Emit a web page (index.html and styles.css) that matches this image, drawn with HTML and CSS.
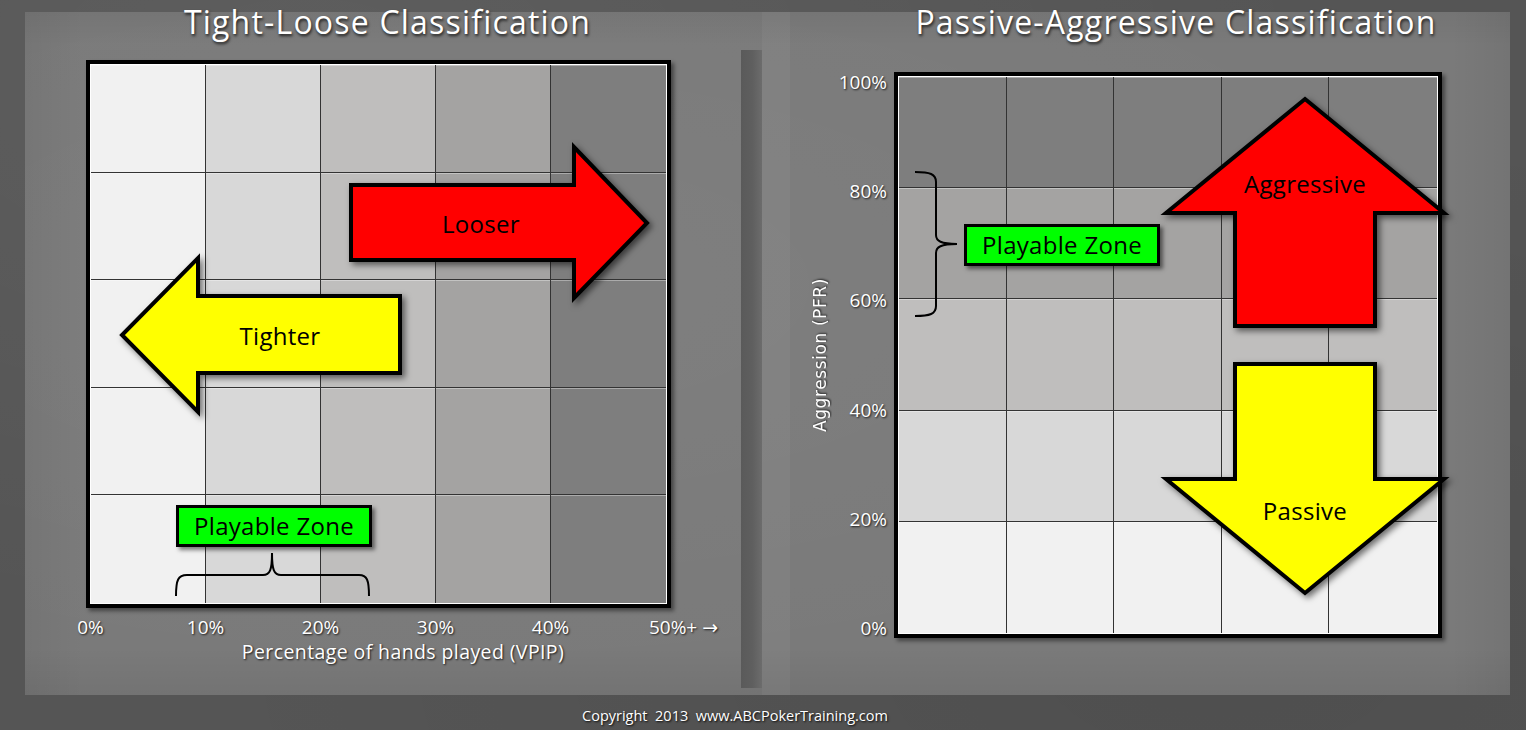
FILE: index.html
```html
<!DOCTYPE html>
<html lang="en">
<head>
<meta charset="utf-8">
<title>Tight-Loose and Passive-Aggressive Classification</title>
<link rel="stylesheet" href="styles.css">
</head>
<body>
<div class="page">
  <div class="board">
    <section class="panel panel-left">
      <h1 class="title title-left">Tight-Loose Classification</h1>
      <div class="chart chart-tl">
        <div class="grid grid-tl">
          <div class="cell"></div><div class="cell"></div><div class="cell"></div><div class="cell"></div><div class="cell"></div>
          <div class="cell"></div><div class="cell"></div><div class="cell"></div><div class="cell"></div><div class="cell"></div>
          <div class="cell"></div><div class="cell"></div><div class="cell"></div><div class="cell"></div><div class="cell"></div>
          <div class="cell"></div><div class="cell"></div><div class="cell"></div><div class="cell"></div><div class="cell"></div>
          <div class="cell"></div><div class="cell"></div><div class="cell"></div><div class="cell"></div><div class="cell"></div>
        </div>
        <svg class="overlay" viewBox="0 0 585 548" width="585" height="548">
          <polygon class="arrow arrow-red" points="265,125 488,125 488,87 561,163 488,238 488,200 265,200"/>
          <text class="arrow-label" x="395" y="163">Looser</text>
          <polygon class="arrow arrow-yellow" points="314,236 112,236 112,198 36,275 112,352 112,313 314,313"/>
          <text class="arrow-label" x="194" y="275">Tighter</text>
          <path class="brace" d="M90,536 C90,520 92,515 101,515 L177,515 C184,515 186,510 186,493 C186,510 188,515 195,515 L273,515 C281,515 283,520 283,536"/>
        </svg>
        <div class="zone zone-tl">Playable Zone</div>
      </div>
      <div class="xaxis">
        <span class="xlabel">0%</span>
        <span class="xlabel">10%</span>
        <span class="xlabel">20%</span>
        <span class="xlabel">30%</span>
        <span class="xlabel">40%</span>
        <span class="xlabel xlabel-last">50%+ →</span>
      </div>
      <div class="xtitle">Percentage of hands played (VPIP)</div>
    </section>
    <div class="divider"></div>
    <section class="panel panel-right">
      <h1 class="title title-right">Passive-Aggressive Classification</h1>
      <div class="plot">
        <div class="ytitle"><span>Aggression (PFR)</span></div>
        <div class="yaxis">
          <span class="ylabel">100%</span>
          <span class="ylabel">80%</span>
          <span class="ylabel">60%</span>
          <span class="ylabel">40%</span>
          <span class="ylabel">20%</span>
          <span class="ylabel">0%</span>
        </div>
        <div class="chart chart-pa">
          <div class="grid grid-pa">
            <div class="cell"></div><div class="cell"></div><div class="cell"></div><div class="cell"></div><div class="cell"></div>
            <div class="cell"></div><div class="cell"></div><div class="cell"></div><div class="cell"></div><div class="cell"></div>
            <div class="cell"></div><div class="cell"></div><div class="cell"></div><div class="cell"></div><div class="cell"></div>
            <div class="cell"></div><div class="cell"></div><div class="cell"></div><div class="cell"></div><div class="cell"></div>
            <div class="cell"></div><div class="cell"></div><div class="cell"></div><div class="cell"></div><div class="cell"></div>
          </div>
          <svg class="overlay" viewBox="0 0 548 566" width="548" height="566">
            <polygon class="arrow arrow-red" points="411,27 550,141 481,141 481,254 341,254 341,141 272,141"/>
            <text class="arrow-label" x="411" y="111">Aggressive</text>
            <polygon class="arrow arrow-yellow" points="341,292 481,292 481,407 550,407 411,521 272,407 341,407"/>
            <text class="arrow-label" x="411" y="438">Passive</text>
            <path class="brace" d="M21,100 C36,100 42,102 42,110 L42,163 C42,169 47,172 63,172 C47,172 42,175 42,181 L42,234 C42,242 36,244 21,244"/>
          </svg>
          <div class="zone zone-pa">Playable Zone</div>
        </div>
      </div>
    </section>
  </div>
  <footer class="copyright">Copyright&nbsp; 2013&nbsp; www.ABCPokerTraining.com</footer>
</div>
</body>
</html>
```

FILE: styles.css
```css
* { box-sizing: border-box; }

html, body {
  margin: 0;
  padding: 0;
}

body {
  background: #545454;
  font-family: "Open Sans", "DejaVu Sans", sans-serif;
  color: #fff;
}

.page {
  width: 1526px;
  height: 730px;
  overflow: hidden;
  background:
    radial-gradient(ellipse at 20% 10%, rgba(255,255,255,0.05), transparent 60%),
    radial-gradient(ellipse at 80% 90%, rgba(0,0,0,0.08), transparent 60%),
    #555555;
}

.board {
  display: flex;
  margin: 12px 16px 0 25px;
  height: 683px;
  background:
    linear-gradient(90deg, rgba(0,0,0,0.05), transparent 4%, transparent 96%, rgba(0,0,0,0.05)),
    linear-gradient(180deg, rgba(0,0,0,0.05), transparent 5%, transparent 93%, rgba(0,0,0,0.06)),
    radial-gradient(ellipse at 30% 40%, rgba(255,255,255,0.04), transparent 70%),
    #7a7a7a;
}

.panel {
  display: flex;
  flex-direction: column;
}

.panel-left { width: 716px; }
.panel-right {
  width: 748px;
  background: linear-gradient(90deg, rgba(255,255,255,0.04) 0, rgba(255,255,255,0.04) 28px, transparent 28px);
}

.divider {
  width: 21px;
  margin-top: 38px;
  height: 638px;
  background: linear-gradient(90deg, #5a5a5a 0, #5f5f5f 55%, #6c6c6c 100%);
}

.title {
  margin: -9px 0 0;
  font-size: 32px;
  font-weight: 400;
  letter-spacing: 1.2px;
  line-height: 38px;
  text-align: center;
  color: #fff;
  text-shadow: 1px 2px 3px rgba(0,0,0,0.75);
  white-space: nowrap;
}

.title-left { padding-left: 9px; }
.title-right { padding-left: 80px; }

/* chart frame */
.chart {
  position: relative;
  border: 4px solid #000;
  padding: 1px;
  background: #fff;
  box-shadow: 3px 3px 4px rgba(0,0,0,0.45);
}

.chart-tl {
  margin: 19px 0 0 61px;
  width: 585px;
  height: 548px;
}

.chart-pa {
  width: 548px;
  height: 566px;
}

.grid {
  display: grid;
  grid-template-columns: repeat(5, 1fr);
  grid-template-rows: repeat(5, 1fr);
  width: 100%;
  height: 100%;
}

.cell {
  border-right: 1px solid #333;
  border-bottom: 1px solid #333;
  box-shadow: inset 0 1px 0 rgba(255,255,255,0.35);
}
.cell:nth-child(5n) { border-right: none; }
.cell:nth-child(n+21) { border-bottom: none; }

/* tight-loose: columns get darker to the right */
.grid-tl .cell:nth-child(5n+1) { background: #f1f1f1; }
.grid-tl .cell:nth-child(5n+2) { background: #d8d8d8; }
.grid-tl .cell:nth-child(5n+3) { background: #bfbebd; }
.grid-tl .cell:nth-child(5n+4) { background: #a4a3a2; }
.grid-tl .cell:nth-child(5n)   { background: #7e7e7e; }

/* passive-aggressive: rows get darker to the top */
.grid-pa .cell:nth-child(-n+5) { background: #7e7e7e; }
.grid-pa .cell:nth-child(n+6) { background: #a4a3a2; }
.grid-pa .cell:nth-child(n+11) { background: #bfbebd; }
.grid-pa .cell:nth-child(n+16) { background: #d8d8d8; }
.grid-pa .cell:nth-child(n+21) { background: #f1f1f1; }

.overlay {
  position: absolute;
  left: -4px;
  top: -4px;
  overflow: visible;
}

.arrow {
  stroke: #000;
  stroke-width: 4;
  stroke-linejoin: miter;
  filter: drop-shadow(3px 3px 3px rgba(0,0,0,0.55));
}
.arrow-red { fill: #ff0000; }
.arrow-yellow { fill: #ffff00; }

.arrow-label {
  font-family: "Open Sans", "DejaVu Sans", sans-serif;
  font-size: 24px;
  letter-spacing: 0.3px;
  fill: #000;
  text-anchor: middle;
  dominant-baseline: central;
}

.brace {
  fill: none;
  stroke: #000;
  stroke-width: 2;
}

.zone {
  position: absolute;
  height: 42px;
  width: 196px;
  border: 3px solid #000;
  background: #00ff00;
  color: #000;
  font-size: 24px;
  letter-spacing: 0.3px;
  line-height: 35px;
  text-align: center;
  white-space: nowrap;
  box-shadow: 3px 3px 4px rgba(0,0,0,0.5);
}
.zone-tl { left: 86px; top: 441px; }
.zone-pa { left: 66px; top: 148px; }

/* x axis */
.xaxis {
  display: flex;
  margin: 8px 0 0 8px;
}

.xlabel {
  width: 115px;
  flex: none;
  text-align: center;
  font-size: 19px;
  line-height: 22px;
  text-shadow: 1px 1px 2px rgba(0,0,0,0.8);
  white-space: nowrap;
}
.xlabel-last { padding-left: 36px; }

.xtitle {
  margin-top: 3px;
  padding-left: 40px;
  text-align: center;
  font-size: 19.5px;
  letter-spacing: 0.4px;
  line-height: 22px;
  text-shadow: 1px 1px 2px rgba(0,0,0,0.8);
  white-space: nowrap;
}

/* y axis */
.plot {
  display: flex;
  margin-top: 31px;
}

.ytitle {
  width: 20px;
  margin-left: 48px;
  display: flex;
  align-items: center;
  justify-content: center;
}

.ytitle span {
  writing-mode: vertical-rl;
  transform: rotate(180deg);
  font-family: "DejaVu Sans", sans-serif;
  font-size: 17px;
  letter-spacing: 0.6px;
  white-space: nowrap;
  text-shadow: 1px 1px 2px rgba(0,0,0,0.7);
}

.yaxis {
  width: 53px;
  margin: 0 7px 0 4px;
  display: flex;
  flex-direction: column;
  justify-content: space-between;
  align-items: flex-end;
  height: 566px;
}

.ylabel {
  font-size: 19px;
  line-height: 20px;
  text-shadow: 1px 1px 2px rgba(0,0,0,0.8);
}

.copyright {
  margin-top: 12px;
  padding-right: 56px;
  text-align: center;
  font-size: 14.5px;
  line-height: 18px;
  text-shadow: 1px 1px 2px rgba(0,0,0,0.9);
}
```
